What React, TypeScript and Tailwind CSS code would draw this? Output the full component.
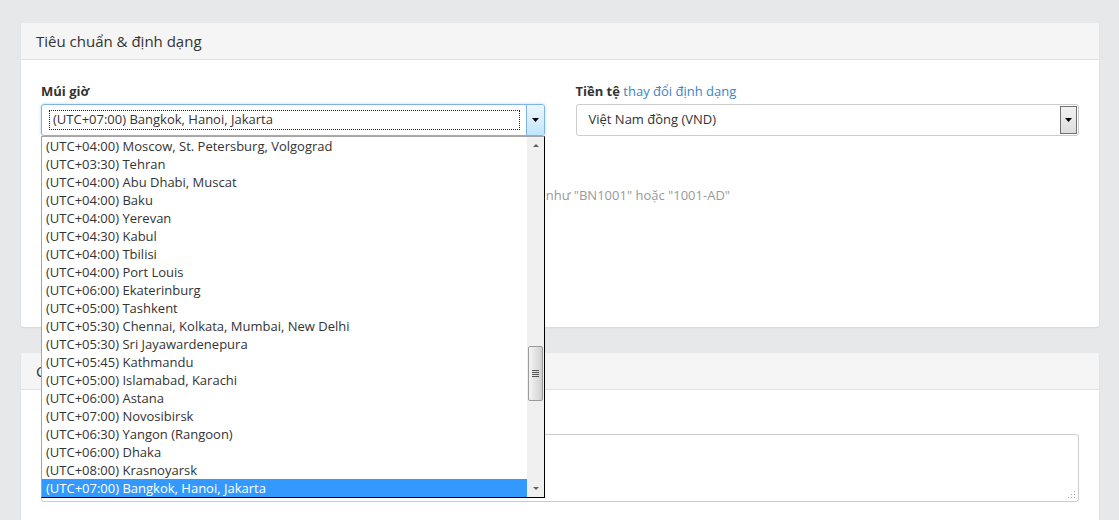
import { ReactNode } from "react";

const zones = [
  "(UTC+04:00) Moscow, St. Petersburg, Volgograd",
  "(UTC+03:30) Tehran",
  "(UTC+04:00) Abu Dhabi, Muscat",
  "(UTC+04:00) Baku",
  "(UTC+04:00) Yerevan",
  "(UTC+04:30) Kabul",
  "(UTC+04:00) Tbilisi",
  "(UTC+04:00) Port Louis",
  "(UTC+06:00) Ekaterinburg",
  "(UTC+05:00) Tashkent",
  "(UTC+05:30) Chennai, Kolkata, Mumbai, New Delhi",
  "(UTC+05:30) Sri Jayawardenepura",
  "(UTC+05:45) Kathmandu",
  "(UTC+05:00) Islamabad, Karachi",
  "(UTC+06:00) Astana",
  "(UTC+07:00) Novosibirsk",
  "(UTC+06:30) Yangon (Rangoon)",
  "(UTC+06:00) Dhaka",
  "(UTC+08:00) Krasnoyarsk",
  "(UTC+07:00) Bangkok, Hanoi, Jakarta",
];

function Card({ title, children }: { title: string; children: ReactNode }) {
  return (
    <div className="rounded-[3px] bg-white shadow-[0_1px_2px_rgba(0,0,0,0.08)]">
      <div className="flex h-[37px] items-center rounded-t-[3px] border-b border-[#e2e2e2] bg-[#f5f5f5] px-[15px] text-[15px] text-[#333]">
        {title}
      </div>
      {children}
    </div>
  );
}

function Caret({ up = false, size = "md" }: { up?: boolean; size?: "md" | "sm" }) {
  const w = size === "md" ? 7 : 6;
  const h = size === "md" ? 4 : 3;
  return (
    <svg width={w} height={h} viewBox={`0 0 ${w} ${h}`} className="block">
      <polygon
        points={up ? `0,${h} ${w},${h} ${w / 2},0` : `0,0 ${w},0 ${w / 2},${h}`}
        fill={size === "md" ? "#000" : "#606060"}
      />
    </svg>
  );
}

function ZoneList() {
  return (
    <div className="absolute left-0 top-[32px] z-10 flex h-[362px] w-[504px] border border-[#a5a5a5] border-b-black border-r-black bg-white">
      <div className="flex-1 overflow-hidden">
        {zones.map((z, i) => (
          <div
            key={z}
            className={`h-[18px] whitespace-nowrap pl-[4px] leading-[18px] ${
              i === zones.length - 1 ? "bg-[#3399ff] text-white" : "text-[#333]"
            }`}
          >
            {z}
          </div>
        ))}
      </div>
      <div className="flex w-[17px] flex-col items-center bg-[#f0f0f0]">
        <div className="flex h-[17px] w-full items-center justify-center">
          <Caret up size="sm" />
        </div>
        <div className="h-[192px]" />
        <div className="flex h-[55px] w-[15px] flex-col items-center justify-center gap-[1px] rounded-[2px] border border-[#9a9a9a] bg-[linear-gradient(to_right,#f4f4f4,#dcdcdc_70%,#cfcfcf)]">
          <div className="h-px w-[7px] bg-[#555]" />
          <div className="h-px w-[7px] bg-[#555]" />
          <div className="h-px w-[7px] bg-[#555]" />
          <div className="h-px w-[7px] bg-[#555]" />
        </div>
        <div className="flex-1" />
        <div className="flex h-[17px] w-full items-center justify-center">
          <Caret size="sm" />
        </div>
      </div>
    </div>
  );
}

export default function App() {
  return (
    <div className="h-[520px] w-[1119px] overflow-hidden bg-[#e7e8ea] pl-[21px] pr-[20px] pt-[23px] font-['Open_Sans',sans-serif] text-[13px] text-[#333]">
      <Card title="Tiêu chuẩn & định dạng">
        <div className="flex h-[267px] flex-col px-[20px] pt-[22px]">
          <div className="grid grid-cols-2 gap-x-[31px]">
            <div>
              <div className="mb-[4px] h-[18px] font-bold leading-[18px]">Múi giờ</div>
              <div className="relative">
                <div className="flex h-[32px] items-center rounded-[3px] border border-[#7fb2e5] pl-[7px] shadow-[0_0_3px_rgba(102,175,233,0.5)]">
                  <div className="flex h-[20px] w-[471px] items-center border border-dotted border-[#222] pl-[3px]">
                    (UTC+07:00) Bangkok, Hanoi, Jakarta
                  </div>
                  <div className="ml-auto flex h-full w-[18px] items-center justify-center rounded-r-[2px] border-l border-[#7fb2e5] bg-[linear-gradient(to_bottom,#eaf6fd,#d9effc_50%,#bee6fd)]">
                    <Caret />
                  </div>
                </div>
                <ZoneList />
              </div>
            </div>
            <div>
              <div className="mb-[4px] h-[18px] leading-[18px]">
                <span className="font-bold">Tiền tệ</span>{" "}
                <a className="text-[#3a85c6]" href="#">
                  thay đổi định dạng
                </a>
              </div>
              <div className="flex h-[32px] items-center rounded-[3px] border border-[#cccccc] pl-[12px]">
                <span>Việt Nam đồng (VND)</span>
                <div className="ml-auto mr-px flex h-[28px] w-[17px] items-center justify-center border border-[#707070] bg-[linear-gradient(to_bottom,#f2f2f2,#dddddd)]">
                  <Caret />
                </div>
              </div>
            </div>
          </div>
          <p className="mt-[50px] h-[18px] whitespace-nowrap pl-[13px] leading-[18px] text-[#999]">
            Thêm tiền tố hoặc hậu tố vào số chứng từ để phân biệt chi nhánh hoặc loại, ví dụ như "BN1001" hoặc "1001-AD"
          </p>
        </div>
      </Card>

      <div className="mt-[26px]">
        <Card title="Chữ ký email">
          <div className="px-[20px] pt-[20px] pb-[20px]">
            <div className="mb-[6px] h-[18px] font-bold leading-[18px]">Nội dung</div>
            <div className="relative">
              <textarea className="block h-[68px] w-full resize-none rounded-[3px] border border-[#cccccc] bg-white" />
              <svg width="8" height="8" viewBox="0 0 8 8" className="absolute bottom-[3px] right-[3px]">
                <rect x="6" y="0" width="1" height="1" fill="#aaa" />
                <rect x="3" y="3" width="1" height="1" fill="#aaa" />
                <rect x="6" y="3" width="1" height="1" fill="#aaa" />
                <rect x="0" y="6" width="1" height="1" fill="#aaa" />
                <rect x="3" y="6" width="1" height="1" fill="#aaa" />
                <rect x="6" y="6" width="1" height="1" fill="#aaa" />
              </svg>
            </div>
          </div>
        </Card>
      </div>
    </div>
  );
}
